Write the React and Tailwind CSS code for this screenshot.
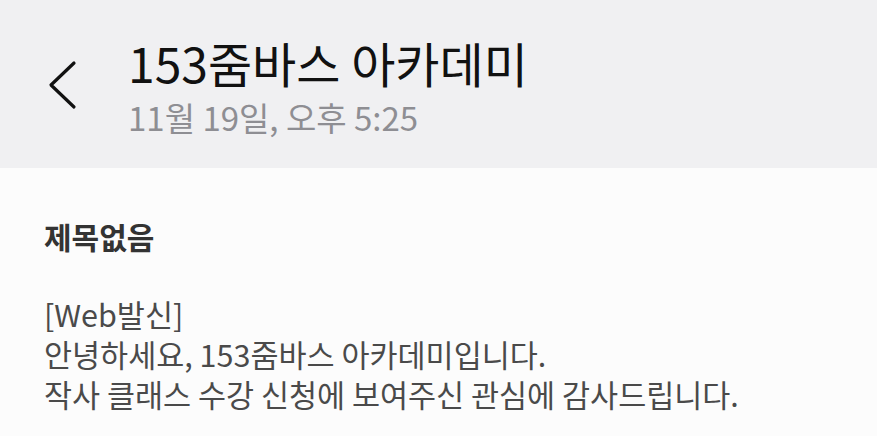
import React from 'react';

const font = { fontFamily: '"Noto Sans CJK KR", "Noto Sans", sans-serif' };

export default function App() {
  return (
    <div className="w-[877px] h-[436px] overflow-hidden bg-[#fcfcfc]" style={font}>
      {/* Header */}
      <div className="h-[168px] bg-[#f0f0f2] flex items-start">
        <div className="w-[128px] shrink-0 pt-[60px] pl-[46px]">
          <svg width="32" height="50" viewBox="0 0 32 50" fill="none">
            <path d="M28 3 L5 25 L28 47" stroke="#111" strokeWidth="3.2" strokeLinecap="round" strokeLinejoin="round" />
          </svg>
        </div>
        <div className="pt-[34px]">
          <div className="text-[48px] leading-[56px] text-[#111]">153줌바스 아카데미</div>
          <div className="text-[33px] leading-[40px] text-[#8e8e93] mt-[7px]">11월 19일, 오후 5:25</div>
        </div>
      </div>

      {/* Body */}
      <div className="px-[44px] pt-[48px]">
        <div className="text-[30px] leading-[40px] font-bold text-[#333]">제목없음</div>
        <div className="mt-[38px] text-[30.5px] leading-[40px] text-[#4a4a4a]">
          <div>[Web발신]</div>
          <div>안녕하세요, 153줌바스 아카데미입니다.</div>
          <div>작사 클래스 수강 신청에 보여주신 관심에 감사드립니다.</div>
        </div>
      </div>
    </div>
  );
}
